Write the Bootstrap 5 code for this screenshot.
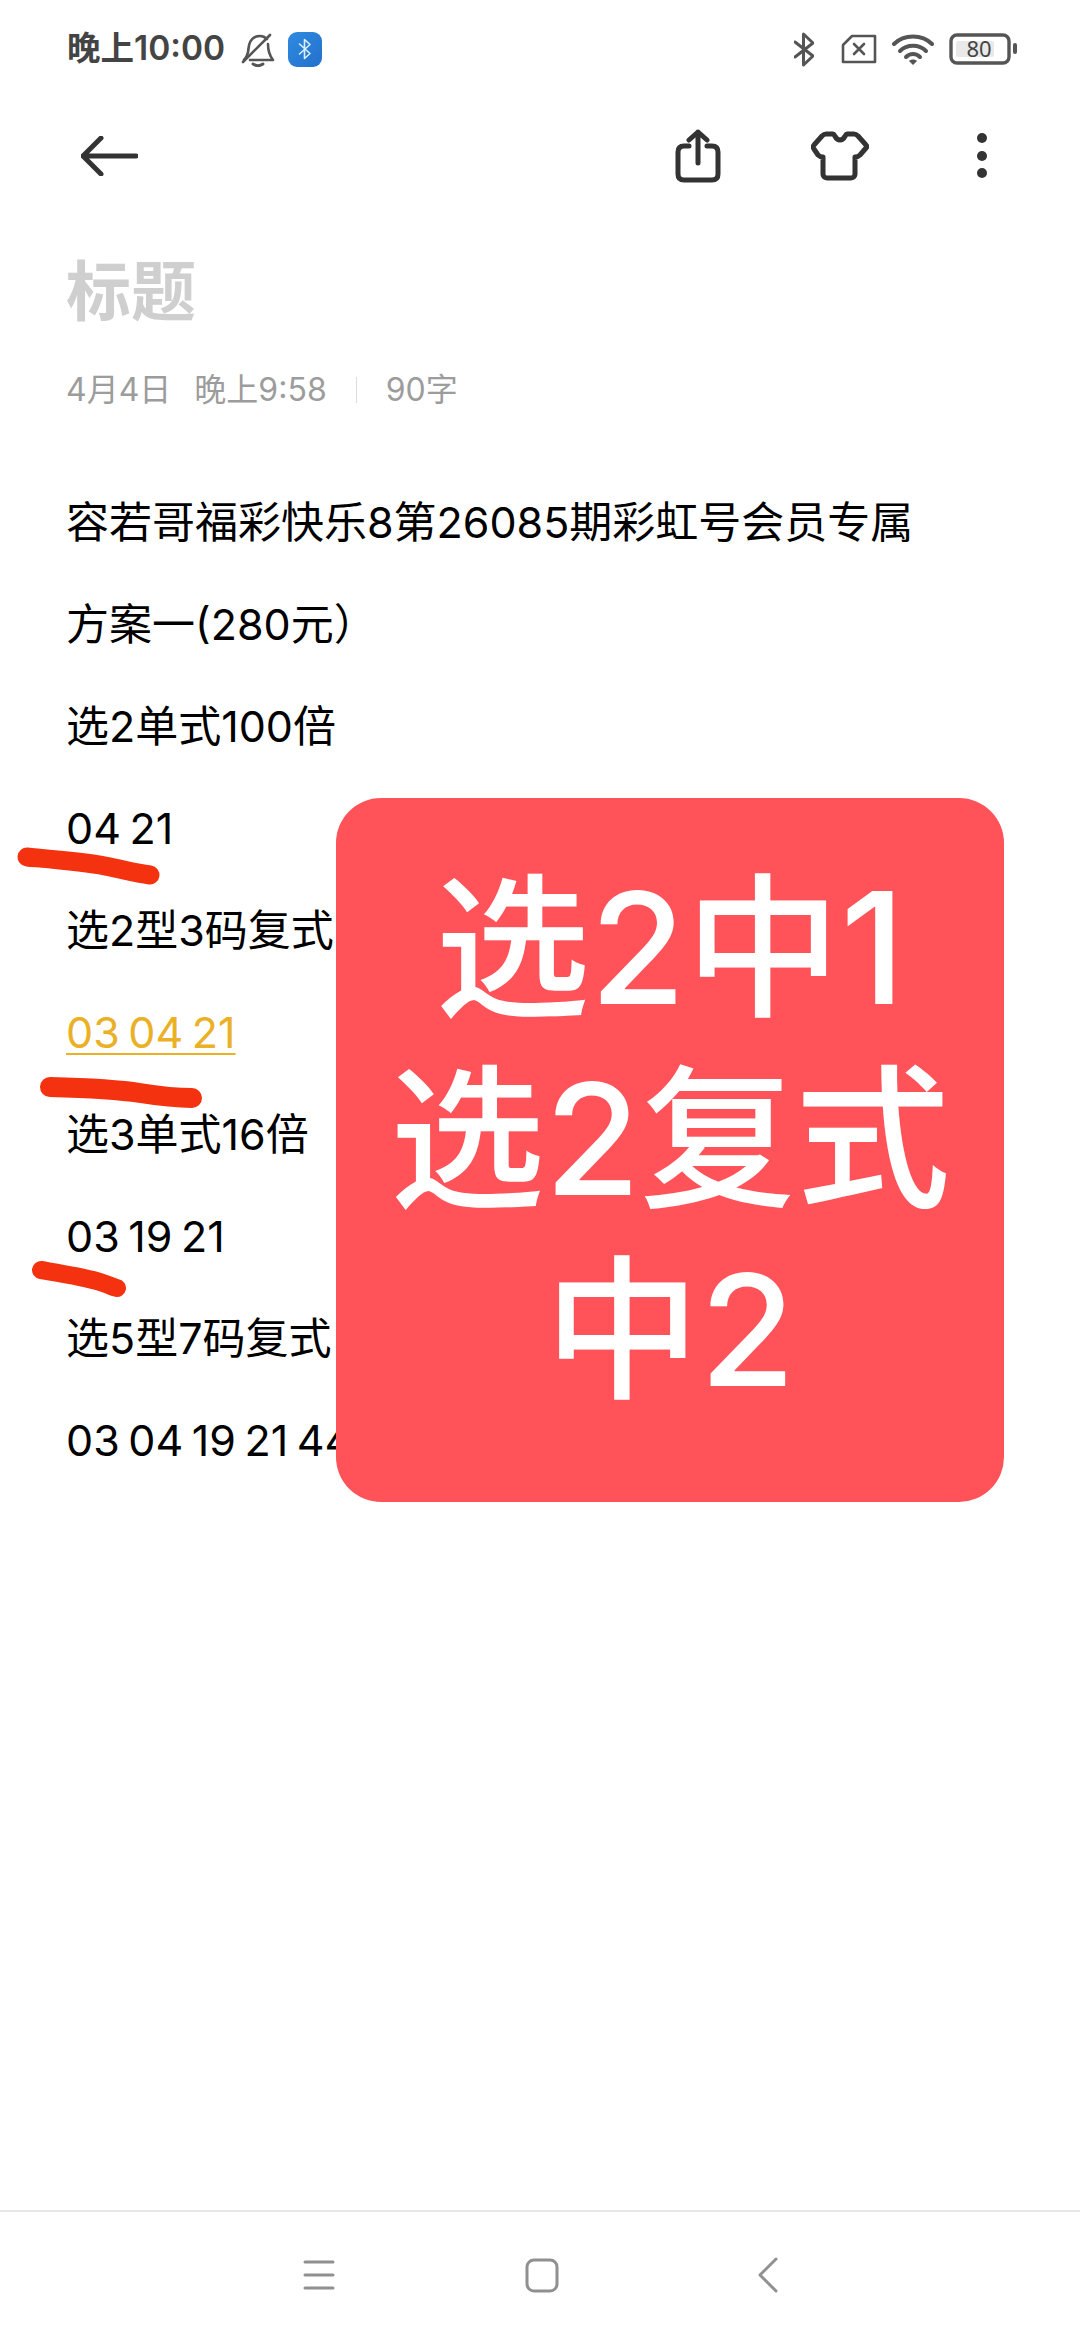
<!DOCTYPE html>
<html lang="zh-CN">
<head>
    <meta charset="UTF-8">
    <meta name="viewport" content="width=device-width, initial-scale=1.0">
    <title>标题</title>
    <link href="https://cdn.jsdelivr.net/npm/bootstrap@5.3.0/dist/css/bootstrap.min.css" rel="stylesheet">
    <script src="https://cdn.jsdelivr.net/npm/bootstrap@5.3.0/dist/js/bootstrap.bundle.min.js"></script>
    <style>
        html, body { margin: 0; background: #fff; }
        body { font-family: Inter, "Noto Sans CJK SC", sans-serif; }
        .phone { width: 1080px; height: 2340px; overflow: hidden; }
        .status-row { height: 98px; padding: 0 63px 0 67px; color: #444; }
        .status-time { font-size: 33.5px; font-weight: 600; line-height: 1; margin-right: 16px; }
        .bt-tile { width: 34px; height: 35px; border-radius: 9px; background: linear-gradient(135deg, #2f8be0, #2470cc); margin-left: 13px; }
        .status-icons { gap: 15px; }
        .bt-glyph { margin-right: 12px; }
        .tool-row { height: 116px; padding: 0 88px 0 81px; }
        .share-btn { margin-right: 90px; }
        .shirt-btn { margin-right: 103px; }
        .note-title { font-size: 65px; font-weight: 700; line-height: 80px; color: #cfcfcf; margin: 38px 0 0 66px; }
        .note-meta { font-size: 32px; line-height: 40px; color: #9c9c9c; margin: 38px 0 0 66px; }
        .meta-time { margin-left: 23px; }
        .meta-sep { width: 1px; height: 26px; background: #ddd; margin: 0 29px; }
        .note-body { margin: 61px 0 0 66px; font-size: 43px; line-height: 102px; color: #000; white-space: nowrap; word-spacing: -3.5px; }
        .note-body p { margin: 0; height: 102px; }
        .num-link { color: #eab026; text-decoration: underline; text-decoration-thickness: 2px; text-underline-offset: 5px; }
        .red-card { left: 336px; top: 798px; width: 668px; height: 704px; border-radius: 45px; background: #ff5259; color: #fff; font-size: 155px; font-weight: 500; line-height: 191px; text-align: center; padding-top: 54px; }
        .ink-marks { left: 0; top: 0; }
        .nav-row { height: 130px; border-top: 2px solid #e8e8e8; padding-bottom: 2px; }
        .nav-row svg { display: block; }
        .nav-menu { margin-right: 190px; }
        .nav-home { margin-right: 199px; }
        .batt-label { font-size: 22px; fill: #444; font-family: "Noto Sans", sans-serif; }
    </style>
</head>
<body>
<div class="phone position-relative d-flex flex-column">

    <div class="status-row d-flex align-items-center justify-content-between">
        <div class="d-flex align-items-center">
            <span class="status-time">晚上10:00</span>
            <svg width="34" height="35" viewBox="0 0 34 35" fill="none" stroke="#555" stroke-width="2.6" stroke-linecap="round" stroke-linejoin="round">
                <path d="M3 28c3-3 4-6 4.500-11C8 9 12 4 19 4c3 0 5 1 7 3"/>
                <path d="M27 12c0 6 1 11 5 16H9"/>
                <path d="M2 30L29 3"/>
                <path d="M12 32c3 2 7 2 10 0" stroke-width="3"/>
            </svg>
            <div class="bt-tile d-flex align-items-center justify-content-center">
                <svg width="14" height="22" viewBox="0 0 14 22" fill="none" stroke="#d8f0ff" stroke-width="1.600" stroke-linejoin="round" stroke-linecap="round">
                    <path d="M1.500 6L12 15.500 6.500 20.500V1.500L12 6.500 1.500 16"/>
                </svg>
            </div>
        </div>
        <div class="status-icons d-flex align-items-center">
            <svg class="bt-glyph" width="20" height="35" viewBox="0 0 20 35" fill="none" stroke="#555" stroke-width="3" stroke-linejoin="round" stroke-linecap="round">
                <path d="M1 10L19 24 9.500 33V2L19 11 1 25"/>
            </svg>
            <svg width="36" height="30" viewBox="0 0 36 30" fill="none" stroke="#555" stroke-width="2.600" stroke-linejoin="round" stroke-linecap="round">
                <path d="M11 2H34V28H2V11Z"/>
                <path d="M13 10L23 20M23 10L13 20"/>
            </svg>
            <svg width="42" height="31" viewBox="0 0 42 31" fill="none" stroke="#555" stroke-linecap="round">
                <path d="M2 10C12 0 30 0 40 10" stroke-width="4"/>
                <path d="M8 17C15 10 27 10 34 17" stroke-width="4"/>
                <path d="M14 23C18 19 24 19 28 23" stroke-width="4"/>
                <path d="M17 27L21 31 25 27C23 25 19 25 17 27Z" fill="#555" stroke="none"/>
            </svg>
            <svg width="68" height="32" viewBox="0 0 68 32" fill="none">
                <rect x="2" y="2" width="58" height="28" rx="6" stroke="#555" stroke-width="3.400"/>
                <rect x="7" y="8" width="38" height="16" rx="2" fill="#e9e9e9"/>
                <text class="batt-label" x="30" y="24" text-anchor="middle">80</text>
                <rect x="64" y="10" width="4" height="11" rx="2" fill="#555"/>
            </svg>
        </div>
    </div>

    <div class="tool-row d-flex align-items-center justify-content-between">
        <svg width="57" height="40" viewBox="0 0 57 40" fill="none" stroke="#333" stroke-width="5" stroke-linecap="round" stroke-linejoin="round">
            <path d="M20 2L2 20 20 38M2 20H55"/>
        </svg>
        <div class="d-flex align-items-center">
            <svg class="share-btn" width="46" height="54" viewBox="0 0 46 54" fill="none" stroke="#333" stroke-width="5" stroke-linecap="round" stroke-linejoin="round">
                <path d="M14 17H9c-4 0-6 2-6 6v22c0 4 2 6 6 6h28c4 0 6-2 6-6V23c0-4-2-6-6-6h-5"/>
                <path d="M23 34V3M14 11L23 3 32 11"/>
            </svg>
            <svg class="shirt-btn" width="58" height="50" viewBox="0 0 58 50" fill="none" stroke="#333" stroke-width="5" stroke-linecap="round" stroke-linejoin="round">
                <path d="M15 3h7c2 0 2 6 7 6s5-6 7-6h7c2 0 3 1 4 2l8 9c1 1 1 2 0 3l-6 7c-1 1-3 2-5 2v17c0 2-1 4-4 4H16c-3 0-4-2-4-4V26c-2 0-4-1-5-2l-4-6c-1-1-1-3 0-4l8-9c1-1 2-2 4-2Z"/>
            </svg>
            <svg width="20" height="56" viewBox="0 0 20 56" fill="#333">
                <circle cx="10" cy="10" r="5"/>
                <circle cx="10" cy="28" r="5"/>
                <circle cx="10" cy="45" r="5"/>
            </svg>
        </div>
    </div>

    <div class="note-title">标题</div>
    <div class="note-meta d-flex align-items-center">
        <span>4月4日</span><span class="meta-time">晚上9:58</span><span class="meta-sep"></span><span>90字</span>
    </div>

    <div class="note-body">
        <p>容若哥福彩快乐8第26085期彩虹号会员专属</p>
        <p>方案一(280元）</p>
        <p>选2单式100倍</p>
        <p>04 21</p>
        <p>选2型3码复式</p>
        <p><span class="num-link">03 04 21</span></p>
        <p>选3单式16倍</p>
        <p>03 19 21</p>
        <p>选5型7码复式</p>
        <p>03 04 19 21 44</p>
    </div>

    <div class="nav-row mt-auto d-flex align-items-center justify-content-center">
        <svg class="nav-menu" width="32" height="30" viewBox="0 0 32 30" fill="none" stroke="#909090" stroke-width="3" stroke-linecap="round">
            <path d="M2 2H30M2 15H30M2 28H30"/>
        </svg>
        <svg class="nav-home" width="34" height="35" viewBox="0 0 34 35" fill="none" stroke="#909090" stroke-width="3">
            <rect x="2" y="2" width="30" height="31" rx="7"/>
        </svg>
        <svg width="20" height="36" viewBox="0 0 20 36" fill="none" stroke="#909090" stroke-width="3" stroke-linecap="round" stroke-linejoin="round">
            <path d="M18 2L2 18 18 34"/>
        </svg>
    </div>

    <!-- hand drawn marks and the sticker lie on top of the note -->
    <svg class="ink-marks position-absolute" width="1080" height="1320" viewBox="0 0 1080 1320" fill="none" stroke="#f4320f" stroke-linecap="round" stroke-linejoin="round">
        <path d="M27 857C60 860 85 862 105 866S135 873 150 875" stroke-width="19"/>
        <path d="M50 1087C90 1088 115 1089 140 1093S175 1098 192 1098" stroke-width="20"/>
        <path d="M41 1270C65 1274 85 1277 100 1282S112 1287 117 1288" stroke-width="18"/>
    </svg>
    <div class="red-card position-absolute">选2中1<br>选2复式<br>中2</div>
</div>
</body>
</html>
